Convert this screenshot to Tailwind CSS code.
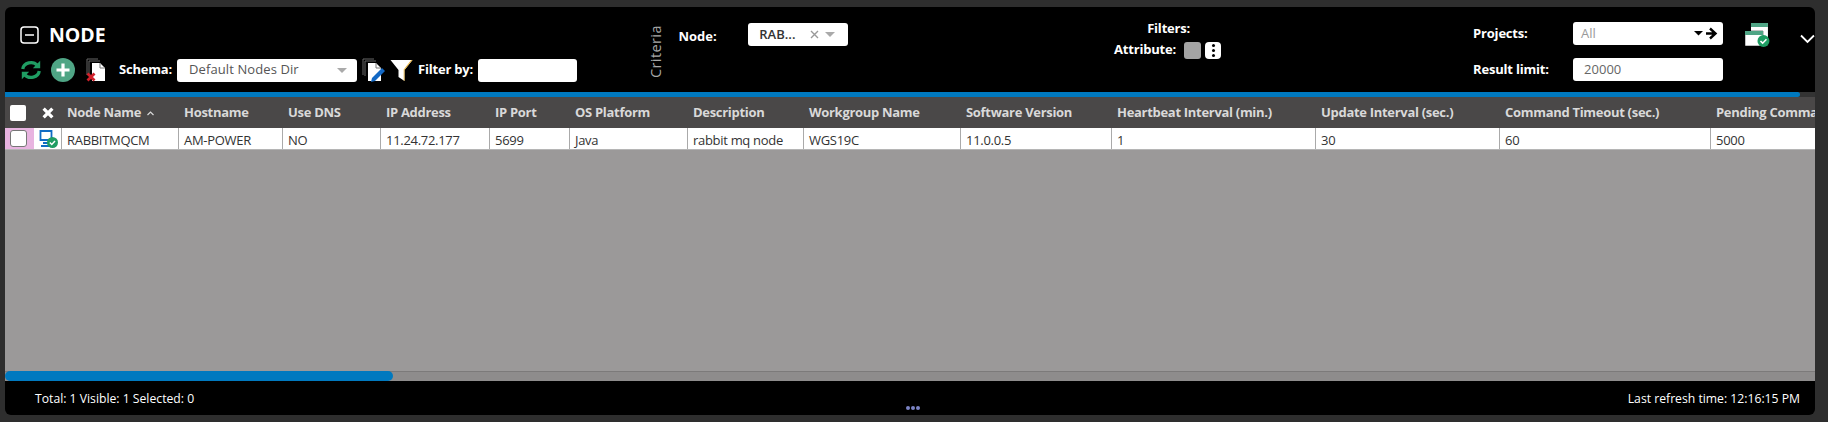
<!DOCTYPE html>
<html lang="en">
<head>
  <meta charset="UTF-8" />
  <title>Node</title>
  <script src="https://cdn.jsdelivr.net/npm/@tailwindcss/browser@4"></script>
</head>
<body class="bg-[#2e2e2e] h-[422px] w-[1828px] overflow-hidden pt-[7px] pl-[5px] font-['Open_Sans',sans-serif]">

  <div class="w-[1810px] h-[408px] bg-black rounded-[6px] overflow-hidden flex flex-col">

    <!-- Top bar -->
    <div class="h-[85px] flex shrink-0 text-white">

      <!-- Title and toolbar -->
      <div class="w-[646px] pl-[15px] pt-[19px]">
        <div class="flex items-center h-[18px]">
          <svg class="w-[19px] h-[18px]" viewBox="0 0 19 18" fill="none" stroke="white" stroke-width="1.5"><rect x="1" y="1" width="17" height="16" rx="3"/><path d="M5 9h9"/></svg>
          <span class="ml-[10px] text-[19.500px] font-bold leading-none">NODE</span>
        </div>
        <div class="flex items-center h-[24px] mt-[14px]">
          <svg class="w-[22px] h-[22px]" viewBox="0 0 24 24" fill="none" stroke="#1f9d63" stroke-width="3.6"><path d="M3 11a9 8 0 0 1 16-4"/><path d="M21 13a9 8 0 0 1-16 4"/><path d="M22 2v8h-8z" fill="#1f9d63" stroke="none"/><path d="M2 22v-8h8z" fill="#1f9d63" stroke="none"/></svg>
          <svg class="w-[24px] h-[24px] ml-[9px]" viewBox="0 0 24 24"><circle cx="12" cy="12" r="12" fill="#4fa585"/><path d="M12 5.5v13M5.5 12h13" stroke="white" stroke-width="3.2"/></svg>
          <svg class="w-[21px] h-[24px] ml-[11px]" viewBox="0 0 21 24"><path d="M1 17V1h11M3 18V3h11" fill="none" stroke="#666" stroke-width="1"/><path d="M6 5h8l5 5v13H6z" fill="white"/><path d="M14 5v5h5" fill="none" stroke="#777" stroke-width="1"/><path d="M1.5 15.5l7 7M8.5 15.5l-7 7" stroke="#d0202a" stroke-width="2.8"/></svg>
          <span class="ml-[12px] w-[58px] text-[13px] font-bold tracking-[-0.2px]">Schema:</span>
          <div class="w-[180px] h-[23px] bg-white rounded-[3px] flex items-center justify-between pl-[12px] pr-[10px] text-[13px] text-[#555] tracking-[0.1px]">
            <span>Default Nodes Dir</span>
            <span class="w-0 h-0 border-x-[5px] border-x-transparent border-t-[5px] border-t-[#aaa]"></span>
          </div>
          <svg class="w-[25px] h-[24px] ml-[5px]" viewBox="0 0 25 24"><path d="M1 17V1h11M3 18V3h11" fill="none" stroke="#666" stroke-width="1"/><path d="M6 5h8l5 5v13H6z" fill="white"/><path d="M14 5v5h5" fill="none" stroke="#777" stroke-width="1"/><path d="M10 20l10-10 3 3-10 10-4 1z" fill="#1368c4"/></svg>
          <svg class="w-[23px] h-[24px] ml-[3px]" viewBox="0 0 23 24"><path d="M0.5 2h22l-8 10v11l-6-4v-7z" fill="white"/><path d="M14.5 12v11l-0.800-0.600V11.600l7.500-9.600h1.300z" fill="#e8b23a"/></svg>
          <span class="ml-[5px] w-[60px] text-[13px] font-bold tracking-[-0.2px]">Filter by:</span>
          <div class="w-[99px] h-[23px] bg-white rounded-[3px]"></div>
        </div>
      </div>

      <!-- Criteria -->
      <div class="w-[14px] h-[54px] mt-[18px] flex items-center justify-center [writing-mode:vertical-rl] rotate-180 text-[14.500px] tracking-[0.4px] text-[#a8a8a8]">Criteria</div>

      <div class="ml-[15px] w-[70px] pt-[17px] h-[36px] text-[13px] font-bold leading-[24px]">Node:</div>
      <div class="mt-[16px] w-[100px] h-[23px] bg-white rounded-[3px] flex items-center pl-[11px] text-[13px] font-semibold text-[#333]">
        <span class="w-[45px]">RAB...</span>
        <svg class="w-[9px] h-[9px] ml-[6px]" viewBox="0 0 9 9" stroke="#999" stroke-width="1.4"><path d="M1 1l7 7M8 1l-7 7"/></svg>
        <span class="ml-[6px] w-0 h-0 border-x-[5px] border-x-transparent border-t-[5px] border-t-[#aaa]"></span>
      </div>

      <!-- Filters -->
      <div class="ml-[266px] w-[107px] pt-[12px] text-center text-[13px] font-bold tracking-[-0.2px]">
        <div class="h-[18px] leading-[18px] pl-[2px]">Filters:</div>
        <div class="flex items-center mt-[4px] h-[18px]">
          <span class="w-[70px] text-left whitespace-nowrap">Attribute:</span>
          <span class="w-[17px] h-[17px] bg-[#a3a3a3] rounded-[3px]"></span>
          <span class="ml-[4px] w-[16px] h-[17px] bg-white rounded-[4px] flex flex-col items-center justify-center gap-[2px]">
            <i class="w-[3px] h-[3px] bg-black rounded-full"></i><i class="w-[3px] h-[3px] bg-black rounded-full"></i><i class="w-[3px] h-[3px] bg-black rounded-full"></i>
          </span>
        </div>
      </div>

      <!-- Projects and limit -->
      <div class="ml-[252px] w-[250px] pt-[15px] text-[13px]">
        <div class="flex items-center h-[23px]">
          <span class="w-[100px] font-bold tracking-[-0.2px]">Projects:</span>
          <div class="w-[150px] h-[23px] bg-white rounded-[3px] flex items-center justify-between pl-[8px] pr-[5px] text-[#999]">
            <span>All</span>
            <svg class="w-[24px] h-[13px]" viewBox="0 0 24 13"><path d="M0 4h9l-4.500 4.500z" fill="black"/><path d="M12 6.500h9M16 1.500l5.500 5-5.500 5" fill="none" stroke="black" stroke-width="2.400"/></svg>
          </div>
        </div>
        <div class="flex items-center h-[23px] mt-[13px]">
          <span class="w-[100px] font-bold tracking-[-0.2px]">Result limit:</span>
          <div class="w-[150px] h-[23px] bg-white rounded-[3px] flex items-center pl-[11px] text-[#666]">20000</div>
        </div>
      </div>

      <svg class="w-[25px] h-[24px] ml-[22px] mt-[16px]" viewBox="0 0 25 24"><path d="M6 0h17v17H6z" fill="white"/><path d="M6 0h17v4H6z" fill="#4fa585"/><path d="M0 8h18v15H0z" fill="white" stroke="#000" stroke-width="0.500"/><path d="M0 8h18v4H0z" fill="#4fa585"/><circle cx="18.500" cy="18" r="6" fill="#1f9d63"/><path d="M15.500 18l2.200 2.200 3.800-4" fill="none" stroke="white" stroke-width="1.600"/></svg>
      <svg class="w-[15px] h-[10px] ml-[30px] mt-[27px]" viewBox="0 0 15 10" fill="none" stroke="white" stroke-width="1.800"><path d="M1 1.500l6.500 6.500L14 1.500"/></svg>
    </div>

    <!-- Upper scrollbar -->
    <div class="h-[5px] shrink-0 bg-[#333]"><div class="w-[1795px] h-full bg-[#0079bf] rounded-r-full"></div></div>

    <!-- Header row -->
    <div class="h-[31px] shrink-0 bg-[#4a4848] grid grid-cols-[29px_27px_117px_104px_98px_109px_80px_118px_116px_157px_151px_204px_184px_211px_200px] items-center text-[13px] font-bold tracking-[-0.3px] text-[#d9d9d9] whitespace-nowrap overflow-hidden pt-[1px]">
      <div class="pl-[5px]"><div class="w-[16px] h-[16px] bg-white rounded-[2px]"></div></div>
      <div class="flex justify-center"><svg class="w-[12px] h-[12px]" viewBox="0 0 11 11" stroke="white" stroke-width="3"><path d="M1.500 1.500l8 8M9.500 1.500l-8 8"/></svg></div>
      <div class="pl-[6px] flex items-center">Node Name<svg class="w-[7px] h-[5px] ml-[6px]" viewBox="0 0 7 5" fill="none" stroke="#d9d9d9" stroke-width="1.200"><path d="M0.500 4l3-3 3 3"/></svg></div>
      <div class="pl-[6px]">Hostname</div>
      <div class="pl-[6px]">Use DNS</div>
      <div class="pl-[6px]">IP Address</div>
      <div class="pl-[6px]">IP Port</div>
      <div class="pl-[6px]">OS Platform</div>
      <div class="pl-[6px]">Description</div>
      <div class="pl-[6px]">Workgroup Name</div>
      <div class="pl-[6px]">Software Version</div>
      <div class="pl-[6px]">Heartbeat Interval (min.)</div>
      <div class="pl-[6px]">Update Interval (sec.)</div>
      <div class="pl-[6px]">Command Timeout (sec.)</div>
      <div class="pl-[6px]">Pending Commands</div>
    </div>

    <!-- Data row -->
    <div class="h-[22px] shrink-0 bg-white grid grid-cols-[29px_27px_117px_104px_98px_109px_80px_118px_116px_157px_151px_204px_184px_211px_200px] text-[13px] leading-[24px] tracking-[-0.3px] text-[#333] whitespace-nowrap overflow-hidden border-b border-[#b5b5b5]">
      <div class="bg-[#e8b4e0] pl-[5px] pt-[2px]"><div class="w-[17px] h-[17px] bg-white border border-[#777] rounded-[3px]"></div></div>
      <div class="pl-[5px] pt-[2px]">
        <svg class="w-[19px] h-[18px]" viewBox="0 0 19 18"><path d="M1.500 1h11v9h-11zM4 13h6M2 16h8" fill="none" stroke="#0f6cc4" stroke-width="1.800"/><circle cx="13.500" cy="12.500" r="5.500" fill="#1f9d63"/><path d="M10.800 12.500l2 2 3.200-3.400" fill="none" stroke="white" stroke-width="1.500"/></svg>
      </div>
      <div class="pl-[5px] border-l border-[#aaa]">RABBITMQCM</div>
      <div class="pl-[5px] border-l border-[#aaa]">AM-POWER</div>
      <div class="pl-[5px] border-l border-[#aaa]">NO</div>
      <div class="pl-[5px] border-l border-[#aaa]">11.24.72.177</div>
      <div class="pl-[5px] border-l border-[#aaa]">5699</div>
      <div class="pl-[5px] border-l border-[#aaa]">Java</div>
      <div class="pl-[5px] border-l border-[#aaa]">rabbit mq node</div>
      <div class="pl-[5px] border-l border-[#aaa]">WGS19C</div>
      <div class="pl-[5px] border-l border-[#aaa]">11.0.0.5</div>
      <div class="pl-[5px] border-l border-[#aaa]">1</div>
      <div class="pl-[5px] border-l border-[#aaa]">30</div>
      <div class="pl-[5px] border-l border-[#aaa]">60</div>
      <div class="pl-[5px] border-l border-[#aaa]">5000</div>
    </div>

    <!-- Empty grid area -->
    <div class="flex-1 bg-[#9b9999]"></div>

    <!-- Lower scrollbar -->
    <div class="h-[10px] shrink-0 bg-[#8e8c8c] border-t border-[#7c7a7a]"><div class="w-[388px] h-[10px] -mt-px bg-[#0079bf] rounded-full"></div></div>

    <!-- Status bar -->
    <div class="h-[34px] shrink-0 flex justify-between text-[12.200px] text-white pl-[30px] pr-[15px] pt-[9px] relative">
      <span>Total: 1 Visible: 1 Selected: 0</span>
      <span>Last refresh time: 12:16:15 PM</span>
      <div class="absolute left-[901px] top-[25px] flex gap-[1.500px]">
        <i class="w-[3.500px] h-[4px] bg-[#7b83c5] rounded-full"></i><i class="w-[3.500px] h-[4px] bg-[#7b83c5] rounded-full"></i><i class="w-[3.500px] h-[4px] bg-[#7b83c5] rounded-full"></i>
      </div>
    </div>
  </div>
</body>
</html>
